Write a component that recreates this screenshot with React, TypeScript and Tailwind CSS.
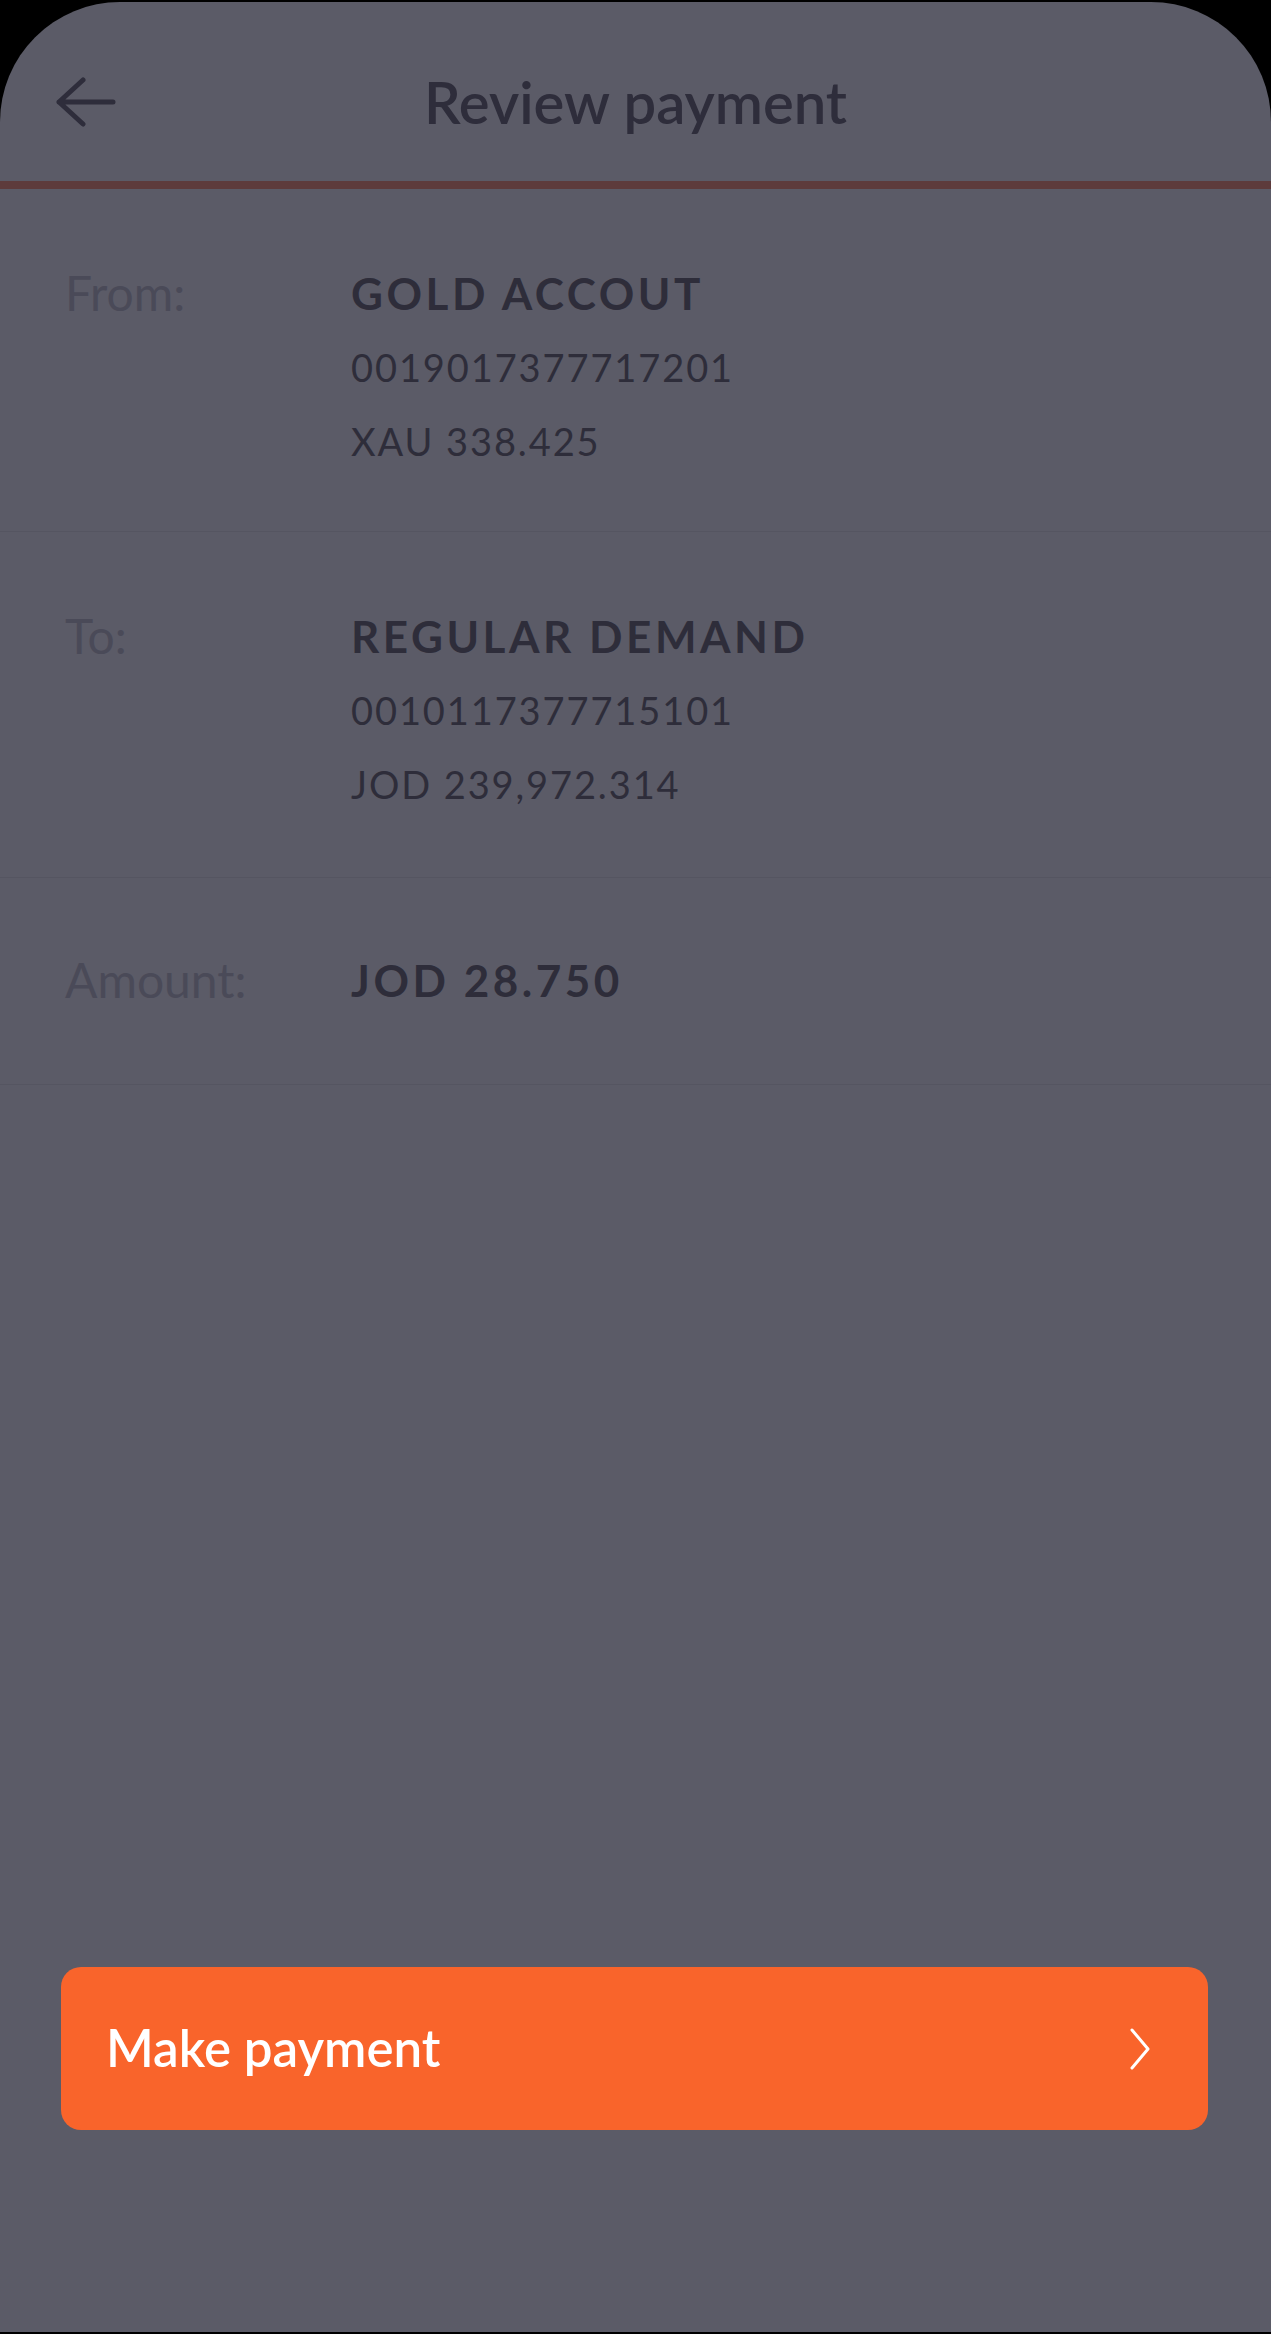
interface Row {
  label: string;
  lines: string[];
  pad: string;
}

const rows: Row[] = [
  {
    label: 'From:',
    lines: ['GOLD ACCOUT', '0019017377717201', 'XAU 338.425'],
    pad: 'pt-[67px] pb-[53px]',
  },
  {
    label: 'To:',
    lines: ['REGULAR DEMAND', '0010117377715101', 'JOD 239,972.314'],
    pad: 'pt-[67px] pb-[56px]',
  },
  {
    label: 'Amount:',
    lines: ['JOD 28.750'],
    pad: 'pt-[65px] pb-[67px]',
  },
];

const font = { fontFamily: 'Lato, "Noto Sans", sans-serif' };

const BackArrow = () => (
  <svg width="62" height="50" viewBox="0 0 62 50" fill="none">
    <path
      d="M59 25H5M29 3L5 25l24 22"
      stroke="#2e2d3b"
      strokeWidth="5"
      strokeLinecap="round"
      strokeLinejoin="round"
    />
  </svg>
);

const Chevron = () => (
  <svg width="22" height="42" viewBox="0 0 22 42" fill="none">
    <path d="M3 2l16 19L3 40" stroke="white" strokeWidth="3" strokeLinecap="round" strokeLinejoin="round" />
  </svg>
);

export default function App() {
  return (
    <div className="flex h-[2334px] w-full flex-col bg-black pt-[2px] pb-[2px]" style={font}>
      <div className="flex flex-1 flex-col overflow-hidden rounded-t-[120px] bg-[#5b5b67]">
        {/* Header */}
        <header className="grid h-[179px] grid-cols-[1fr_auto_1fr] items-center pt-[20px]">
          <div className="pl-[54px]">
            <BackArrow />
          </div>
          <h1 className="text-[58px] font-semibold leading-none text-[#2e2d3b]">Review payment</h1>
          <div />
        </header>
        <div className="h-[8px] bg-[#5d3b3c]" />

        {/* Detalle */}
        {rows.map((row) => (
          <div key={row.label} className={`flex border-b border-[#555561] pl-[65px] ${row.pad}`}>
            <div className="w-[286px] shrink-0 text-[48px] font-normal leading-[74px] text-[#4a4a58]">
              {row.label}
            </div>
            <div className="flex flex-col text-[#2e2d3a]">
              {row.lines.map((line, i) => (
                <span
                  key={line}
                  className={
                    i === 0
                      ? 'text-[44px] font-bold leading-[74px] tracking-[0.08em]'
                      : 'text-[38px] font-normal leading-[74px] tracking-[0.05em]'
                  }
                >
                  {line}
                </span>
              ))}
            </div>
          </div>
        ))}

        <div className="flex-1" />

        {/* Botón */}
        <div className="pl-[61px] pr-[63px] pb-[202px]">
          <button className="flex h-[163px] w-full items-center justify-between rounded-[20px] bg-[#f9642b] pl-[45px] pr-[57px] text-white">
            <span className="text-[51px] font-semibold">Make payment</span>
            <Chevron />
          </button>
        </div>
      </div>
    </div>
  );
}
